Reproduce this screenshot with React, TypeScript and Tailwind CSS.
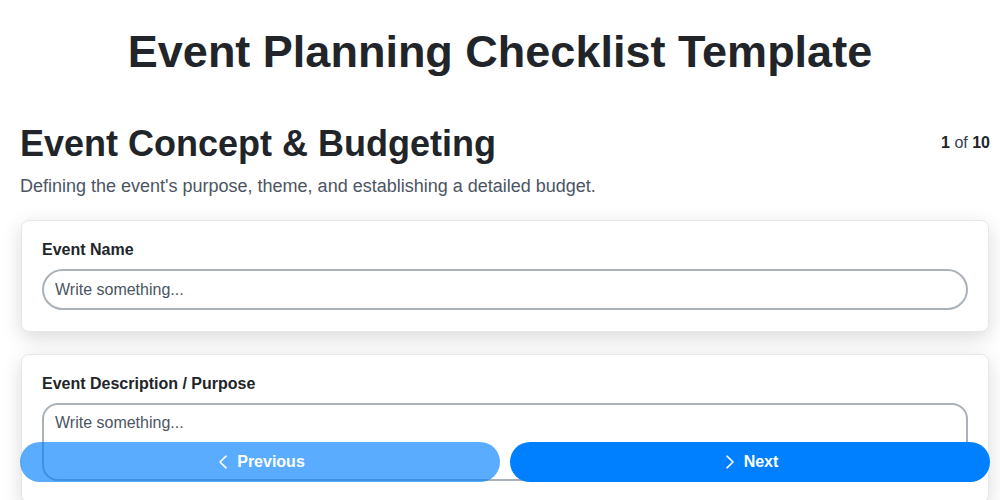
import React from "react";

function ChevronLeft() {
  return (
    <svg width="16" height="16" viewBox="0 0 16 16" fill="none" stroke="currentColor" strokeWidth="1.6" strokeLinecap="round" strokeLinejoin="round">
      <path d="M11 2.2L5 8l6 5.8" />
    </svg>
  );
}
function ChevronRight() {
  return (
    <svg width="16" height="16" viewBox="0 0 16 16" fill="none" stroke="currentColor" strokeWidth="1.6" strokeLinecap="round" strokeLinejoin="round">
      <path d="M5 2.2L11 8l-6 5.8" />
    </svg>
  );
}

export default function App() {
  return (
    <div className="min-h-screen bg-white text-[#212529] font-['Liberation_Sans',Arial,sans-serif]">
      <h1 className="px-5 pt-[24px] text-center text-[45px] font-bold leading-[56px]">Event Planning Checklist Template</h1>
      <div className="pl-5 pr-[10px]">
        <div className="mt-[42px] flex items-start justify-between">
          <h2 className="text-[36px] font-bold leading-[44px]">Event Concept &amp; Budgeting</h2>
          <div className="mt-[11px] text-[16px] leading-[20px]">
            <span className="font-bold">1</span> <span className="text-[#374151]">of</span> <span className="font-bold">10</span>
          </div>
        </div>
        <p className="mt-[8px] text-[18px] leading-[24px] text-[#4b5563]">Defining the event's purpose, theme, and establishing a detailed budget.</p>
        <div className="mt-[22px] flex flex-col gap-[22px] px-px">
          <div className="rounded-lg border border-[#e5e7eb] bg-white px-5 pt-[19px] pb-[21px] shadow-[0_6px_20px_rgba(0,0,0,0.15)]">
            <label className="block text-[16px] font-bold leading-[20px]">Event Name</label>
            <div className="mt-[9px] flex h-[41px] items-center rounded-full border-2 border-[#aab1b9] px-[11px] text-[16px] text-[#4b5563]">Write something...</div>
          </div>
          <div className="rounded-lg border border-[#e5e7eb] bg-white px-5 pt-[19px] pb-[21px] shadow-[0_6px_20px_rgba(0,0,0,0.15)]">
            <label className="block text-[16px] font-bold leading-[20px]">Event Description / Purpose</label>
            <div className="mt-[9px] h-[78px] rounded-2xl border-2 border-[#aab1b9] px-[11px] pt-[8px] text-[16px] leading-[20px] text-[#4b5563]">Write something...</div>
          </div>
        </div>
      </div>
      <div className="fixed bottom-[18px] left-5 right-[10px] flex gap-[10px]">
        <button className="flex h-[40px] flex-1 items-center justify-center gap-[6px] rounded-full bg-[#0080ff] text-[16px] font-bold text-white opacity-65">
          <ChevronLeft />Previous
        </button>
        <button className="flex h-[40px] flex-1 items-center justify-center gap-[6px] rounded-full bg-[#0080ff] text-[16px] font-bold text-white">
          <ChevronRight />Next
        </button>
      </div>
    </div>
  );
}
